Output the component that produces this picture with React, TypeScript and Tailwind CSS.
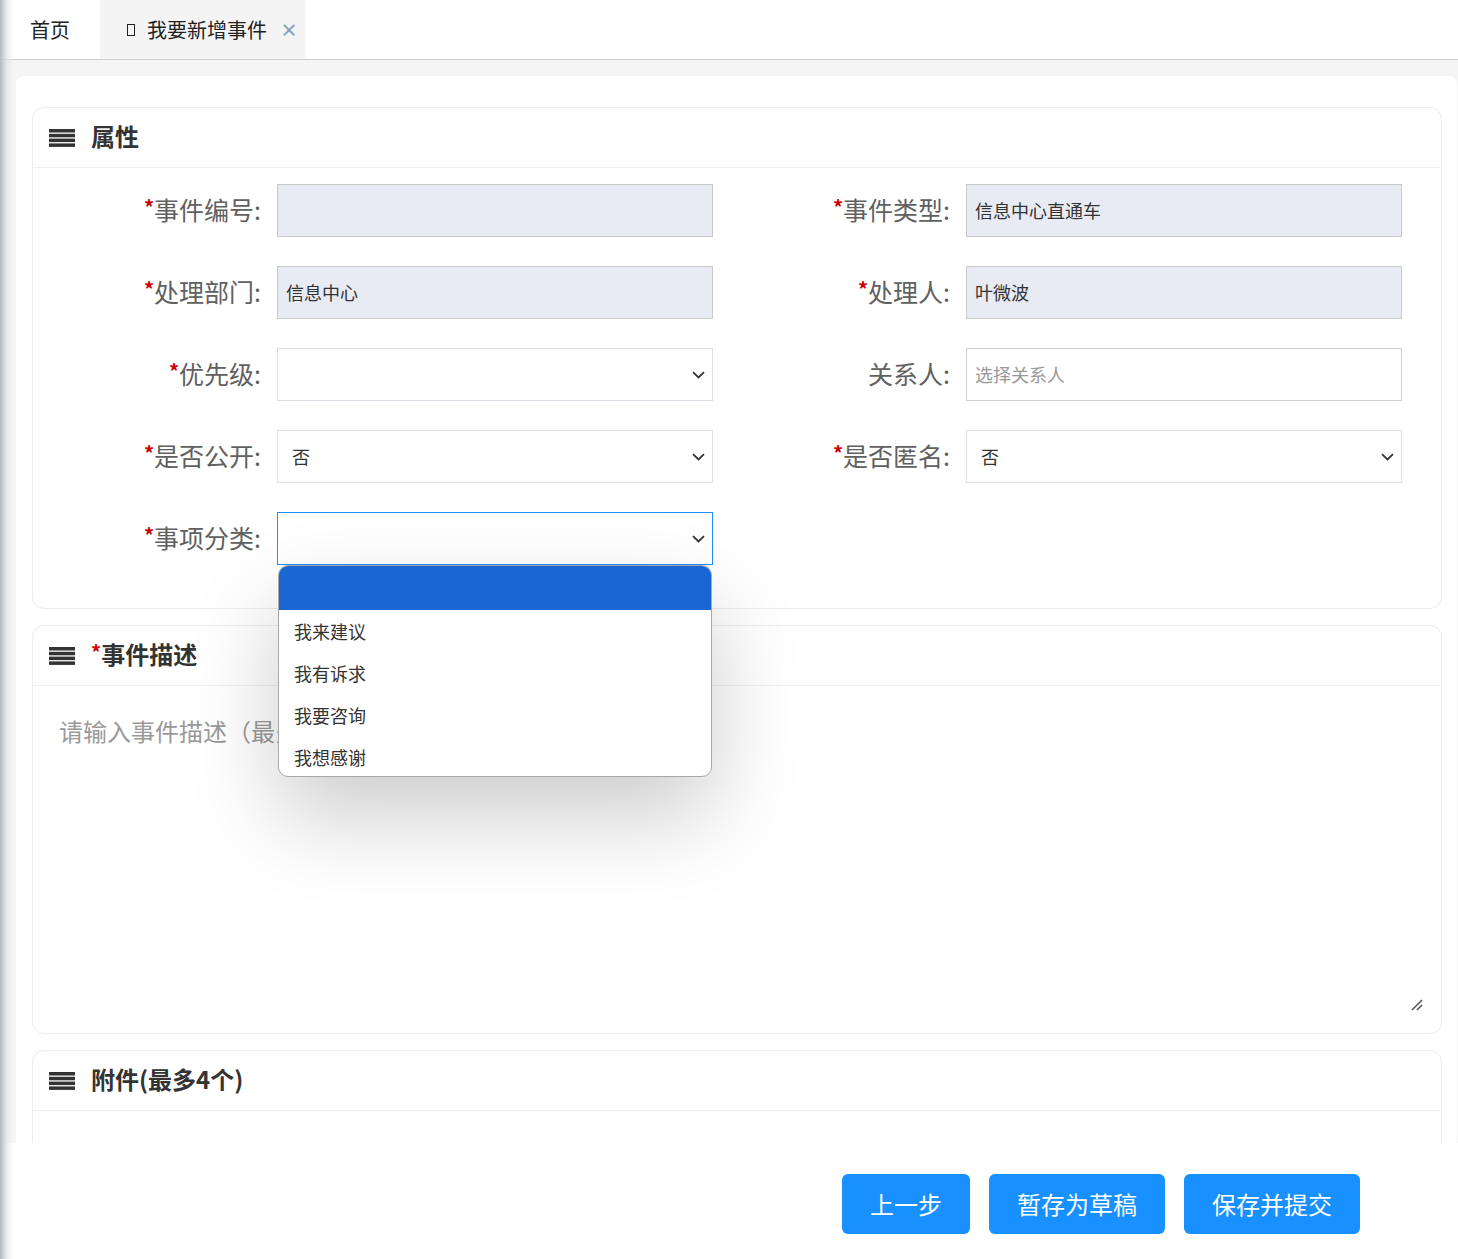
import React from "react";

const FONT = { fontFamily: '"Noto Sans CJK SC", "Noto Sans", sans-serif' };

function MenuIcon() {
  return (
    <svg width="26" height="18" viewBox="0 0 26 18" className="shrink-0">
      <rect x="0" y="0" width="26" height="3.5" fill="#333" />
      <rect x="0" y="4.8" width="26" height="3.5" fill="#333" />
      <rect x="0" y="9.6" width="26" height="3.5" fill="#333" />
      <rect x="0" y="14.4" width="26" height="3.5" fill="#333" />
    </svg>
  );
}

function Chevron() {
  return (
    <svg width="13" height="8" viewBox="0 0 13 8" className="shrink-0">
      <path d="M1 1.2 L6.5 6.5 L12 1.2" fill="none" stroke="#333" strokeWidth="1.8" />
    </svg>
  );
}

function PanelHeader({ title, required }: { title: string; required?: boolean }) {
  return (
    <div className="h-[60px] flex items-center gap-4 px-4 border-b border-[#efefef] shrink-0">
      <MenuIcon />
      <span className="text-[24px] font-bold text-[#333] leading-none -mt-[3px]">
        {required && <span className="text-[#c00] text-[20px] align-top">*</span>}
        {title}
      </span>
    </div>
  );
}

function Label({ text, required }: { text: string; required?: boolean }) {
  return (
    <div className="w-[228px] text-right text-[25px] text-[#606060] leading-none shrink-0 -mt-[3px]">
      {required && <span className="text-[#c00] text-[20px] font-bold align-top">*</span>}
      {text}:
    </div>
  );
}

function Field({
  label,
  required,
  kind,
  value,
  placeholder,
  focused,
  children,
}: {
  label: string;
  required?: boolean;
  kind: "disabled" | "select" | "text";
  value?: string;
  placeholder?: string;
  focused?: boolean;
  children?: React.ReactNode;
}) {
  let box = "";
  if (kind === "disabled") box = "bg-[#e8ebf3] border-[#c9c9c9] pl-[8px]";
  else if (kind === "select") box = `bg-white ${focused ? "border-[#1e8fff]" : "border-[#dcdfe6]"} pl-[14px] pr-[7px] justify-between`;
  else box = "bg-white border-[#cfcfcf] pl-[8px]";
  return (
    <div className="flex items-center gap-4">
      <Label text={label} required={required} />
      <div className="relative">
        <div className={`w-[436px] h-[53px] border flex items-center text-[18px] ${box}`}>
          {value ? (
            <span className="text-[#333]">{value}</span>
          ) : (
            <span className="text-[#999]">{placeholder ?? ""}</span>
          )}
          {kind === "select" && <Chevron />}
        </div>
        {children}
      </div>
    </div>
  );
}

function Dropdown() {
  const options = ["我来建议", "我有诉求", "我要咨询", "我想感谢"];
  return (
    <div className="absolute left-[1px] top-[53px] w-[434px] h-[212px] z-10 bg-white border border-[#a8a8a8] rounded-[10px] overflow-hidden shadow-[0_40px_90px_rgba(0,0,0,0.2)]">
      <div className="h-[44px] bg-[#1967d2]" />
      {options.map((o) => (
        <div key={o} className="h-[42px] flex items-center px-[15px] text-[18px] text-[#333] shrink-0">
          {o}
        </div>
      ))}
    </div>
  );
}

export default function App() {
  return (
    <div className="relative w-[1458px] h-[1259px] bg-white overflow-hidden" style={FONT}>
      {/* left edge shade */}
      <div className="pointer-events-none absolute left-0 top-0 bottom-0 w-[14px] z-20 bg-gradient-to-r from-[#b5b9c1] via-[#e3e5e9]/70 to-transparent" />

      {/* tab bar */}
      <div className="h-[60px] flex border-b border-[#cfcfcf] bg-white">
        <div className="w-[100px] flex items-center justify-center text-[20px] text-[#222]">首页</div>
        <div className="w-[205px] bg-[#f4f4f4] flex items-center pl-[27px] gap-[12px] text-[20px] text-[#222]">
          <span className="w-[8px] h-[12px] border border-[#222] inline-block" />
          <span>我要新增事件</span>
          <span className="text-[#8aa0c0] text-[18px] font-bold ml-[1px]">×</span>
        </div>
      </div>

      {/* main scroll area */}
      <div className="h-[1083px] bg-[#f5f5f5] pl-[16px] pr-[1px] pt-[16px] overflow-hidden">
        <div className="h-full bg-white rounded-t-[8px] pl-[16px] pr-[15px] pt-[31px] flex flex-col gap-[16px]">
          {/* 属性 */}
          <div className="border border-[#ececec] rounded-[12px] shrink-0">
            <PanelHeader title="属性" />
            <div className="pt-4 pb-[43px] grid grid-cols-[680px_680px] gap-x-[9px] gap-y-[29px]">
              <Field label="事件编号" required kind="disabled" />
              <Field label="事件类型" required kind="disabled" value="信息中心直通车" />
              <Field label="处理部门" required kind="disabled" value="信息中心" />
              <Field label="处理人" required kind="disabled" value="叶微波" />
              <Field label="优先级" required kind="select" />
              <Field label="关系人" kind="text" placeholder="选择关系人" />
              <Field label="是否公开" required kind="select" value="否" />
              <Field label="是否匿名" required kind="select" value="否" />
              <Field label="事项分类" required kind="select" focused>
                <Dropdown />
              </Field>
            </div>
          </div>

          {/* 事件描述 */}
          <div className="border border-[#ececec] rounded-[12px] h-[409px] flex flex-col shrink-0">
            <PanelHeader title="事件描述" required />
            <div className="relative flex-1 pl-[26px] pt-[33px]">
              <span className="text-[24px] text-[#999] leading-none">请输入事件描述（最多500字）</span>
              <svg width="12" height="12" viewBox="0 0 12 12" className="absolute right-[18px] bottom-[22px]">
                <path d="M1 11 L11 1 M6 11 L11 6" stroke="#555" strokeWidth="1.5" />
              </svg>
            </div>
          </div>

          {/* 附件 */}
          <div className="border border-[#ececec] rounded-[12px] h-[200px] shrink-0">
            <PanelHeader title="附件(最多4个)" />
          </div>
        </div>
      </div>

      {/* footer */}
      <div className="h-[116px] bg-white flex items-start justify-end pr-[98px] pt-[31px] gap-[19px]">
        <button type="button" className="h-[60px] px-7 rounded-md bg-[#1890ff] text-white text-[24px]">上一步</button>
        <button type="button" className="h-[60px] px-7 rounded-md bg-[#1890ff] text-white text-[24px]">暂存为草稿</button>
        <button type="button" className="h-[60px] px-7 rounded-md bg-[#1890ff] text-white text-[24px]">保存并提交</button>
      </div>
    </div>
  );
}
